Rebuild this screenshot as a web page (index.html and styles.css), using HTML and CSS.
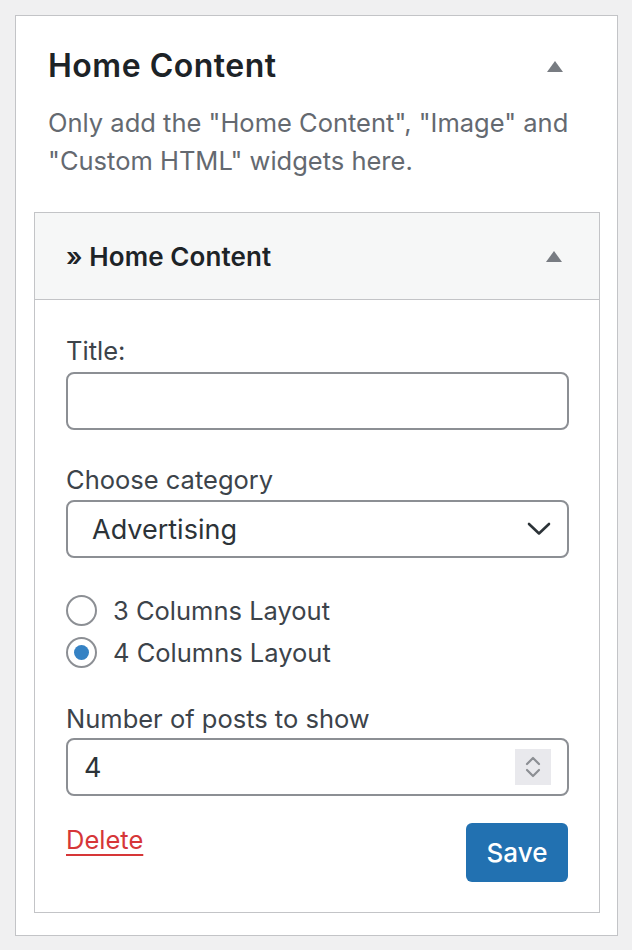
FILE: index.html
```html
<!DOCTYPE html>
<html lang="en">
<head>
<meta charset="utf-8">
<title>Home Content widget</title>
<link rel="stylesheet" href="styles.css">
</head>
<body>
<div class="panel">
  <div class="panel-head">
    <h2 class="panel-title">Home Content</h2>
    <span class="toggle-arrow"></span>
  </div>
  <p class="panel-desc">Only add the "Home Content", "Image" and "Custom HTML" widgets here.</p>

  <div class="widget">
    <div class="widget-top">
      <h3 class="widget-title">» Home Content</h3>
      <span class="toggle-arrow"></span>
    </div>
    <div class="widget-inside">
      <div class="field">
        <label class="field-label">Title:</label>
        <div class="text-input"></div>
      </div>

      <div class="field field-category">
        <label class="field-label">Choose category</label>
        <div class="select">
          <span class="select-value">Advertising</span>
          <svg class="select-chevron" width="24" height="14" viewBox="0 0 24 14"><path d="M2 2 L12 11.5 L22 2" fill="none" stroke="#2c3338" stroke-width="2.6" stroke-linecap="round" stroke-linejoin="round"/></svg>
        </div>
      </div>

      <div class="radios">
        <div class="radio-row"><span class="radio"></span><span class="radio-label">3 Columns Layout</span></div>
        <div class="radio-row"><span class="radio checked"></span><span class="radio-label">4 Columns Layout</span></div>
      </div>

      <div class="field field-number">
        <label class="field-label">Number of posts to show</label>
        <div class="number-input">
          <span class="number-value">4</span>
          <span class="spinner">
            <svg width="36" height="36" viewBox="0 0 36 36"><path d="M12 15 L18 9 L24 15" fill="none" stroke="#8c8f94" stroke-width="2.2" stroke-linecap="round" stroke-linejoin="round"/><path d="M12 21 L18 27 L24 21" fill="none" stroke="#8c8f94" stroke-width="2.2" stroke-linecap="round" stroke-linejoin="round"/></svg>
          </span>
        </div>
      </div>

      <div class="widget-actions">
        <a class="delete-link" href="#">Delete</a>
        <button class="save-button" type="button">Save</button>
      </div>
    </div>
  </div>
</div>
</body>
</html>
```
FILE: styles.css
```css
* { box-sizing: border-box; }

html, body {
  margin: 0;
  padding: 0;
  background: #f0f0f1;
  font-family: "Inter", "Roboto", "Liberation Sans", sans-serif;
}

body {
  padding: 15px 14px 14px 15px;
}

.panel {
  background: #fff;
  border: 1px solid #c3c4c7;
  padding: 30px 17px 21px 18px;
  height: 921px;
}

.panel-head {
  display: flex;
  align-items: center;
  justify-content: space-between;
  padding: 0 37px 0 14px;
  height: 40px;
}

.panel-title {
  margin: 0;
  font-size: 32px;
  line-height: 40px;
  font-weight: 600;
  letter-spacing: 0.5px;
  color: #1d2327;
}

.toggle-arrow {
  width: 0;
  height: 0;
  border-left: 8px solid transparent;
  border-right: 8px solid transparent;
  border-bottom: 11px solid #787c82;
}

.panel-desc {
  margin: 18px 0 0 14px;
  padding-right: 16px;
  font-size: 25.5px;
  line-height: 38px;
  color: #646970;
}

.widget {
  margin-top: 32px;
  border: 1px solid #c3c4c7;
}

.widget-top {
  display: flex;
  align-items: center;
  justify-content: space-between;
  height: 87px;
  padding: 0 37px 0 31px;
  background: #f6f7f7;
  border-bottom: 1px solid #c3c4c7;
}

.widget-title {
  margin: 0;
  font-size: 26px;
  font-weight: 600;
  letter-spacing: 0.1px;
  color: #1d2327;
}

.widget-inside {
  padding: 34px 31px 30px 31px;
}

.field-label {
  display: block;
  font-size: 25.5px;
  line-height: 34px;
  color: #3c434a;
}

.text-input,
.select,
.number-input {
  margin-top: 4px;
  height: 58px;
  border: 2px solid #8c8f94;
  border-radius: 8px;
  background: #fff;
  width: 503px;
}

.field-category {
  margin-top: 33px;
}

.select {
  margin-top: 3px;
  display: flex;
  align-items: center;
  justify-content: space-between;
  padding: 0 16px 0 24px;
}

.select-value {
  font-size: 27px;
  color: #2c3338;
}

.radios {
  margin-top: 31px;
}

.radio-row {
  display: flex;
  align-items: center;
  height: 42px;
}

.radio {
  width: 31px;
  height: 31px;
  border: 2px solid #8c8f94;
  border-radius: 50%;
  background: #fff;
  display: flex;
  align-items: center;
  justify-content: center;
}

.radio.checked::after {
  content: "";
  width: 15px;
  height: 15px;
  border-radius: 50%;
  background: #3582c4;
}

.radio-label {
  margin-left: 16px;
  font-size: 25.5px;
  color: #3c434a;
}

.field-number {
  margin-top: 29px;
}

.number-input {
  margin-top: 2px;
  display: flex;
  align-items: center;
  justify-content: space-between;
  padding: 0 16px 0 16px;
}

.number-value {
  font-size: 27px;
  color: #2c3338;
}

.spinner {
  width: 36px;
  height: 36px;
  background: #e9e9ed;
  display: flex;
}

.widget-actions {
  margin-top: 27px;
  display: flex;
  justify-content: space-between;
  align-items: flex-start;
}

.delete-link {
  margin-top: 1px;
  font-size: 25.5px;
  line-height: 32px;
  color: #d63638;
  text-decoration: underline;
  text-underline-offset: 5px;
  text-decoration-thickness: 2px;
}

.save-button {
  width: 102px;
  height: 59px;
  border: 0;
  border-radius: 6px;
  background: #2271b1;
  color: #fff;
  font-family: inherit;
  font-size: 26px;
  font-weight: 500;
  padding: 0;
}
```
